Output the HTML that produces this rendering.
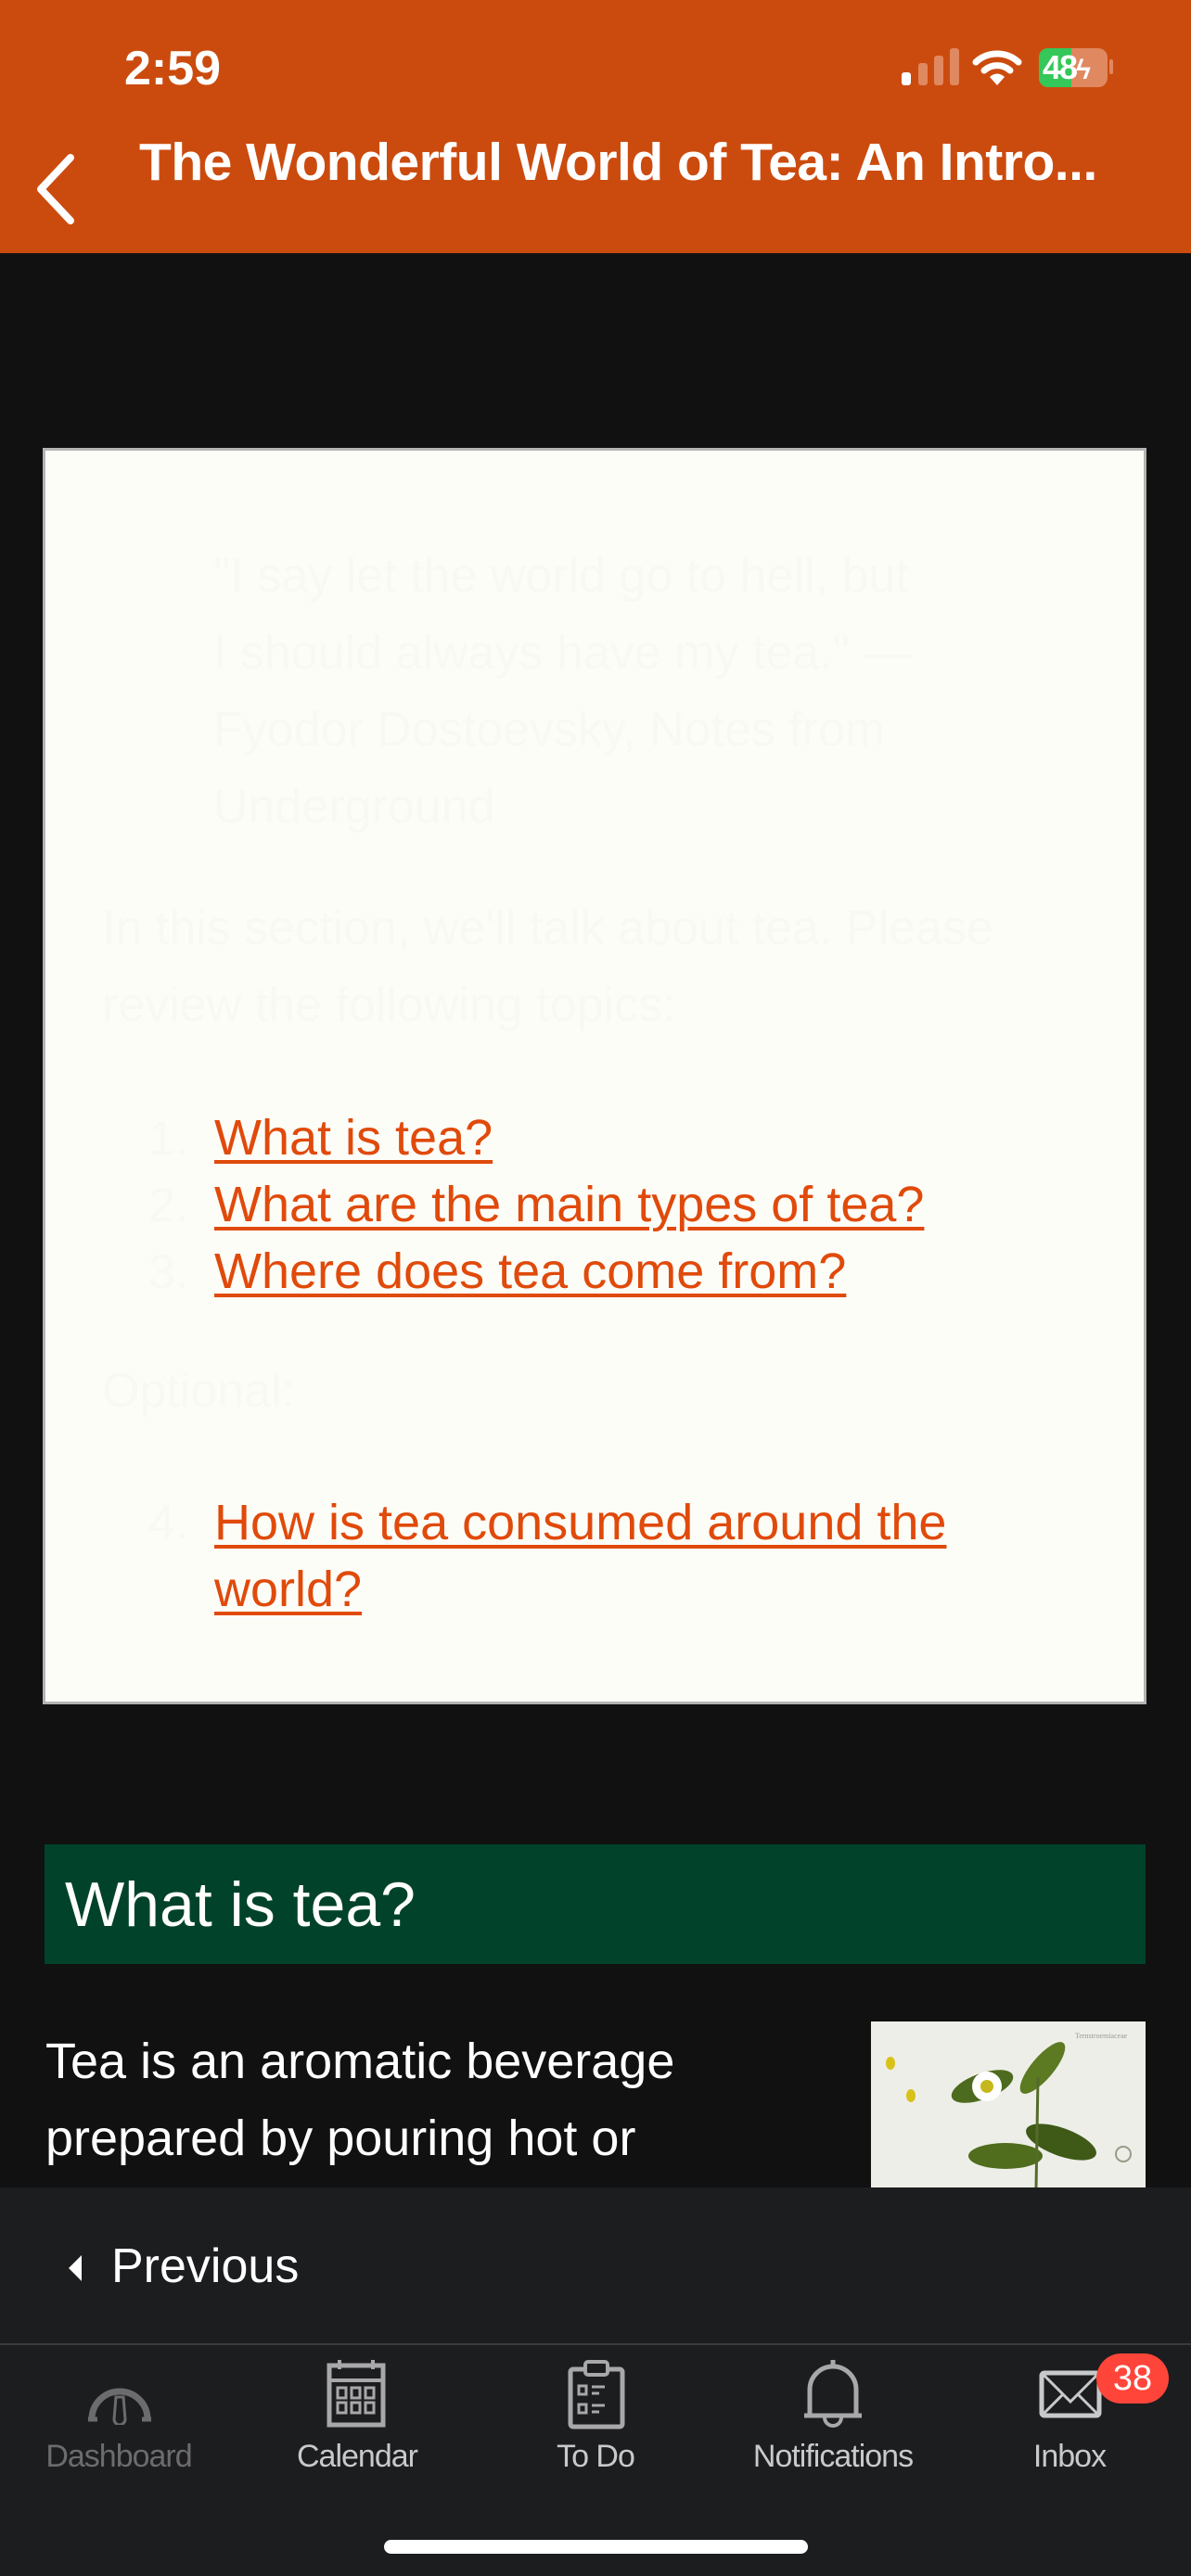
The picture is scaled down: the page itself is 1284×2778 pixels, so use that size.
<!DOCTYPE html>
<html><head><meta charset="utf-8"><style>
*{margin:0;padding:0;box-sizing:border-box}
body{width:1284px;height:2778px;background:#111111;font-family:"Liberation Sans",sans-serif;position:relative;overflow:hidden}
.a{position:absolute;white-space:nowrap}
.hdr{position:absolute;left:0;top:0;width:1284px;height:273px;background:#cb4b0e}
.box{position:absolute;left:46px;top:483px;width:1190px;height:1355px;background:#fdfdf8;border:3px solid #b4b4b4}
.faint{color:#f9f9f3;font-size:52px}
.lnk{color:#e04a0b;text-decoration:underline;text-decoration-thickness:4px;text-underline-offset:6px}
.num{color:#f9f9f3;font-size:52px}
.tab{position:absolute;top:2630px;width:250px;text-align:center;font-size:34px;letter-spacing:-1px;color:#c8c9cb}
</style></head><body>
<div class="hdr"></div>
<div class="a" style="left:134px;top:44px;font-size:52px;font-weight:bold;color:#fff">2:59</div>
<div class="a" style="left:972px;top:78px;width:10px;height:14px;background:#fff;border-radius:3px"></div>
<div class="a" style="left:990px;top:68px;width:10px;height:24px;background:#e08860;border-radius:3px"></div>
<div class="a" style="left:1007px;top:60px;width:10px;height:32px;background:#e08860;border-radius:3px"></div>
<div class="a" style="left:1024px;top:52px;width:10px;height:40px;background:#e08860;border-radius:3px"></div>
<svg class="a" style="left:1048px;top:52px" width="54" height="42" viewBox="0 0 54 42"><path d="M4 15 A34 34 0 0 1 50 15" stroke="#fff" stroke-width="7" fill="none" stroke-linecap="round"/><path d="M13 24 A21 21 0 0 1 41 24" stroke="#fff" stroke-width="7" fill="none" stroke-linecap="round"/><path d="M27 40 L19 31 A11 11 0 0 1 35 31 Z" fill="#fff"/></svg>
<div class="a" style="left:1120px;top:52px;width:74px;height:42px;border-radius:10px;background:#e08860;overflow:hidden"><div style="width:35px;height:42px;background:#34c759"></div></div>
<div class="a" style="left:1196px;top:64px;width:4px;height:16px;background:#e08860;border-radius:2px"></div>
<div class="a" style="left:1124px;top:52px;font-size:36px;font-weight:bold;color:#fff;line-height:42px;letter-spacing:-2px">48<span style="font-size:30px">ϟ</span></div>
<svg class="a" style="left:36px;top:164px" width="52" height="80" viewBox="0 0 52 80"><path d="M40 6 L8 40 L40 74" stroke="#fff" stroke-width="8" fill="none" stroke-linecap="round" stroke-linejoin="round"/></svg>
<div class="a" style="left:150px;top:142px;font-size:57px;font-weight:bold;color:#fff;letter-spacing:-0.5px">The Wonderful World of Tea: An Intro...</div>

<div class="box"></div>
<div class="a faint" style="left:230px;top:580px;line-height:83px">"I say let the world go to hell, but<br>I should always have my tea." —<br>Fyodor Dostoevsky, Notes from<br>Underground</div>
<div class="a faint" style="left:110px;top:960px;line-height:83px">In this section, we'll talk about tea. Please<br>review the following topics:</div>
<div class="a num" style="left:160px;top:1192px;line-height:72px">1.<br>2.<br>3.</div>
<div class="a" style="left:231px;top:1191px;line-height:72px;font-size:54px"><span class="lnk">What is tea?</span><br><span class="lnk">What are the main types of tea?</span><br><span class="lnk">Where does tea come from?</span></div>
<div class="a faint" style="left:110px;top:1470px">Optional:</div>
<div class="a num" style="left:160px;top:1606px;line-height:72px">4.</div>
<div class="a" style="left:231px;top:1606px;line-height:72px;font-size:54px"><span class="lnk">How is tea consumed around the</span><br><span class="lnk">world?</span></div>

<div class="a" style="left:48px;top:1989px;width:1187px;height:129px;background:#00432a"></div>
<div class="a" style="left:70px;top:2015px;font-size:68px;color:#fff">What is tea?</div>
<div class="a" style="left:49px;top:2182px;font-size:54px;color:#fff;line-height:83px">Tea is an aromatic beverage<br>prepared by pouring hot or</div>
<svg class="a" style="left:939px;top:2180px" width="296" height="180" viewBox="0 0 296 180"><rect width="296" height="180" fill="#eeeee8"/>
<text x="220" y="18" font-size="8" fill="#999" font-family="Liberation Serif, serif">Ternstroemiaceae</text>
<ellipse cx="120" cy="70" rx="35" ry="14" transform="rotate(-20 120 70)" fill="#4d6b1e"/>
<ellipse cx="185" cy="50" rx="35" ry="12" transform="rotate(-50 185 50)" fill="#5b7a22"/>
<ellipse cx="205" cy="130" rx="40" ry="15" transform="rotate(20 205 130)" fill="#3e5a16"/>
<ellipse cx="145" cy="145" rx="40" ry="14" fill="#4f6d1d"/>
<circle cx="125" cy="70" r="16" fill="#fff"/><circle cx="125" cy="70" r="7" fill="#c6b81c"/>
<path d="M180 60 L178 180" stroke="#556b2a" stroke-width="3"/>
<ellipse cx="21" cy="45" rx="5" ry="7" fill="#d8c21a"/><ellipse cx="43" cy="80" rx="5" ry="7" fill="#d8c21a"/>
<circle cx="272" cy="143" r="8" fill="none" stroke="#998" stroke-width="2"/></svg>

<div class="a" style="left:0;top:2359px;width:1284px;height:419px;background:#1c1d1f"></div>
<svg class="a" style="left:74px;top:2432px" width="16" height="28"><path d="M14 0 L0 14 L14 28 Z" fill="#fff"/></svg>
<div class="a" style="left:120px;top:2414px;font-size:52px;color:#fff">Previous</div>
<div class="a" style="left:0;top:2527px;width:1284px;height:2px;background:#3a3b3d"></div>
<svg class="a" style="left:91px;top:2553px" width="76" height="62" viewBox="0 0 76 62"><path d="M8 56 A30 30 0 1 1 68 56" stroke="#6c6c6e" stroke-width="7" fill="none"/><path d="M4 56 H14 M62 56 H72" stroke="#6c6c6e" stroke-width="5"/><path d="M34 32 L42 32 L44 56 A6 6 0 0 1 32 56 Z" stroke="#6c6c6e" stroke-width="3" fill="none"/></svg>
<svg class="a" style="left:352px;top:2545px" width="64" height="74" viewBox="0 0 64 74"><rect x="3" y="6" width="58" height="64" stroke="#a8a8aa" stroke-width="5" fill="none"/><path d="M3 22 H61 M14 0 V10 M50 0 V10" stroke="#a8a8aa" stroke-width="4"/><g fill="none" stroke="#a8a8aa" stroke-width="3"><rect x="12" y="30" width="9" height="11"/><rect x="27" y="30" width="9" height="11"/><rect x="42" y="30" width="9" height="11"/><rect x="12" y="46" width="9" height="11"/><rect x="27" y="46" width="9" height="11"/><rect x="42" y="46" width="9" height="11"/></g></svg>
<svg class="a" style="left:612px;top:2545px" width="62" height="76" viewBox="0 0 62 76"><rect x="3" y="10" width="56" height="62" rx="3" stroke="#a8a8aa" stroke-width="5" fill="none"/><rect x="19" y="2" width="24" height="14" rx="3" stroke="#a8a8aa" stroke-width="4" fill="#1c1d1f"/><g stroke="#a8a8aa" stroke-width="3" fill="none"><rect x="12" y="28" width="8" height="9"/><rect x="12" y="48" width="8" height="9"/></g><path d="M26 29 H40 M26 36 H34 M26 49 H40 M26 56 H34" stroke="#a8a8aa" stroke-width="3"/></svg>
<svg class="a" style="left:865px;top:2543px" width="66" height="80" viewBox="0 0 66 80"><path d="M33 2 V8 M8 60 V34 A25 25 0 0 1 58 34 V60 M2 62 H64" stroke="#a8a8aa" stroke-width="5" fill="none"/><path d="M24 64 A9 9 0 0 0 42 64" stroke="#a8a8aa" stroke-width="4" fill="none"/></svg>
<svg class="a" style="left:1120px;top:2556px" width="68" height="52" viewBox="0 0 68 52"><rect x="3" y="3" width="62" height="46" rx="3" stroke="#c8c9cb" stroke-width="5" fill="none"/><path d="M3 3 L34 34 L65 3 M3 49 L26 26 M65 49 L42 26" stroke="#c8c9cb" stroke-width="3" fill="none"/></svg>
<div class="a" style="left:1182px;top:2538px;width:78px;height:54px;border-radius:27px;background:#ff453a;color:#fff;font-size:38px;text-align:center;line-height:54px">38</div>
<div class="tab" style="left:3px;color:#6c6c6e">Dashboard</div>
<div class="tab" style="left:260px">Calendar</div>
<div class="tab" style="left:517px">To Do</div>
<div class="tab" style="left:773px">Notifications</div>
<div class="tab" style="left:1028px">Inbox</div>
<div class="a" style="left:414px;top:2739px;width:457px;height:15px;border-radius:8px;background:#fff"></div>
</body></html>
